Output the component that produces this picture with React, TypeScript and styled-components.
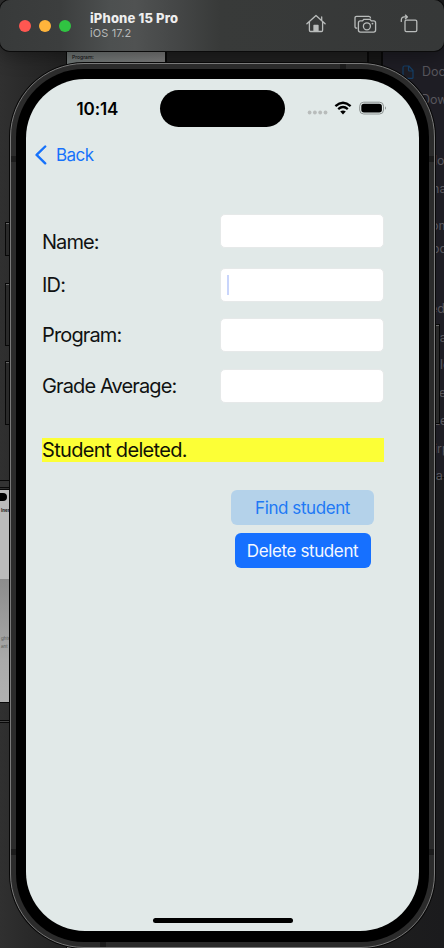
import React from "react";
import styled, { createGlobalStyle } from "styled-components";

const Global = createGlobalStyle`
  *, *::before, *::after { box-sizing: border-box; }
  html, body { margin: 0; background: #202020; overflow: hidden; }
  body { font-family: Inter, "Liberation Sans", sans-serif; }
`;

const Desktop = styled.main`
  position: relative;
  width: 444px;
  height: 948px;
  overflow: hidden;
  background: linear-gradient(90deg, #303030 0, #292929 30px, #1b1b1b 110px, #1e1e1e 370px, #1b1b1d 100%);
`;

/* Windows lying behind the simulator */
const BackWindow = styled.div<{ $x: number; $y: number; $w: number; $h: number; $bg: string }>`
  position: absolute;
  left: ${(p) => p.$x}px;
  top: ${(p) => p.$y}px;
  display: flex;
  flex-direction: column;
  width: ${(p) => p.$w}px;
  height: ${(p) => p.$h}px;
  background: ${(p) => p.$bg};
  border: 1px solid #090909;
`;

const PreviewCaption = styled.span`
  padding: 8px 0 0 5px;
  font-size: 5px;
  line-height: 6px;
  font-weight: 500;
  color: #151515;
`;

const MiniIsland = styled.i`
  width: 7px;
  height: 8px;
  margin-top: 3px;
  border-radius: 0 4px 4px 0;
  background: #000;
`;

const MiniText = styled.span<{ $height: number; $strong?: boolean }>`
  height: ${(p) => p.$height}px;
  padding-left: 1px;
  font-size: 4.5px;
  line-height: 6px;
  font-weight: ${(p) => (p.$strong ? 700 : 400)};
  white-space: nowrap;
  color: ${(p) => (p.$strong ? "#222" : "#555")};
`;

const MiniContent = styled.div`
  display: flex;
  flex-direction: column;
  height: 68px;
  margin-top: 7px;
`;

const Sidebar = styled.nav`
  display: flex;
  flex-direction: column;
  padding: 19px 0 0 19px;
`;

const SidebarItem = styled.div<{ $height: number; $indent: number }>`
  display: flex;
  align-items: flex-start;
  gap: 8px;
  height: ${(p) => p.$height}px;
  padding-left: ${(p) => p.$indent}px;
  font-size: 12.5px;
  line-height: 13px;
  white-space: nowrap;
  color: #57565c;
`;

const TitleBar = styled.header`
  position: relative;
  display: flex;
  align-items: center;
  height: 51px;
  padding: 0 26px 0 19px;
  border-radius: 10px;
  background: linear-gradient(90deg, #383a3a 0, #3c3e3e 60px, #4d5050 110px, #505252 135px, #454747 175px, #383a39 220px, #363838 100%);
  box-shadow: 0 0 0 1px #0b0b0b, 0 4px 20px rgba(0, 0, 0, 0.4);
`;

const Lights = styled.div`
  display: flex;
  gap: 8px;
`;

const Light = styled.i<{ $color: string }>`
  width: 12px;
  height: 12px;
  border-radius: 50%;
  background: ${(p) => p.$color};
`;

const Device = styled.div`
  flex: 1;
  margin-left: 19px;
  white-space: nowrap;
`;

const DeviceName = styled.div`
  font-size: 13px;
  font-weight: 800;
  line-height: 15px;
  letter-spacing: 0.16px;
  color: #eeeeee;
`;

const DeviceSystem = styled.div`
  font-size: 11px;
  line-height: 14px;
  letter-spacing: 0.12px;
  color: #b8baba;
`;

const Tools = styled.div`
  display: flex;
  align-items: center;
  gap: 28px;
  padding-bottom: 4px;
  > :last-child { margin-left: -4.5px; }
`;

const Phone = styled.section`
  position: relative;
  width: 425px;
  height: 885px;
  margin: 12px 0 0 10px;
  padding: 5px;
  border: 1px solid #7a7a7a;
  border-radius: 74px;
  background: #2b2b2b;
  box-shadow: 0 0 0 1px #080808;
`;

const Bezel = styled.div`
  width: 413px;
  height: 873px;
  padding: 10px;
  border-radius: 68px;
  background: #000;
`;

const Screen = styled.div`
  display: flex;
  flex-direction: column;
  width: 393px;
  height: 852px;
  border-radius: 59px;
  overflow: hidden;
  background: #e1e9e8;
`;

const Antenna = styled.i<{ $x: number; $y: number; $flat?: boolean }>`
  position: absolute;
  left: ${(p) => p.$x}px;
  top: ${(p) => p.$y}px;
  width: ${(p) => (p.$flat ? 6 : 5)}px;
  height: ${(p) => (p.$flat ? 5 : 6)}px;
  background: #1b1b1b;
`;

const SideButton = styled.i<{ $x: number; $y: number; $h: number }>`
  position: absolute;
  left: ${(p) => p.$x}px;
  top: ${(p) => p.$y}px;
  width: 5px;
  height: ${(p) => p.$h}px;
  background: #2a2a2a;
  border: 1px solid #080808;
  box-shadow: inset 0 1px #686868;
`;

const StatusBar = styled.div`
  display: flex;
  align-items: flex-start;
  height: 59px;
  padding-top: 11px;
`;

const Time = styled.time`
  width: 134px;
  padding: 8px 0 0 50.5px;
  font-size: 17px;
  font-weight: 600;
  line-height: 22px;
  letter-spacing: -0.1px;
  white-space: nowrap;
  color: #000;
`;

const Island = styled.div`
  width: 125px;
  height: 37px;
  border-radius: 19px;
  background: #000;
`;

const StatusIcons = styled.svg`
  margin: 8px 0 0 21px;
`;

const BackButton = styled.button`
  display: flex;
  align-items: center;
  gap: 9px;
  height: 34px;
  margin: 0;
  padding: 0 0 0 9px;
  border: 0;
  background: none;
  font: 400 17px/22px Inter, sans-serif;
  letter-spacing: -0.55px;
  color: #1672fb;
`;

const Form = styled.form`
  display: flex;
  flex-direction: column;
  padding: 42px 35px 0 16px;
`;

const Row = styled.label<{ $gap: number; $labelTop: number }>`
  display: grid;
  grid-template-columns: 178px 164px;
  height: 34px;
  margin-bottom: ${(p) => p.$gap}px;
  > span { padding-top: ${(p) => p.$labelTop}px; }
`;

const LabelText = styled.span<{ $spacing: number }>`
  font-size: 20px;
  line-height: 24px;
  letter-spacing: ${(p) => p.$spacing}px;
  white-space: nowrap;
  color: #101212;
`;

const Field = styled.div`
  display: flex;
  align-items: center;
  height: 34px;
  padding-left: 6px;
  border: 1px solid #e6e9e9;
  border-radius: 5px;
  background: #fff;
`;

const Caret = styled.i`
  width: 2px;
  height: 20px;
  background: #c9d5fb;
`;

const Notice = styled.output`
  display: block;
  height: 24px;
  margin-top: 1px;
  font-size: 20px;
  line-height: 25px;
  letter-spacing: -0.66px;
  background: #fcff36;
  color: #101205;
`;

const Actions = styled.div`
  display: flex;
  flex-direction: column;
  align-items: center;
  gap: 8px;
  width: 164px;
  margin: 28px 0 0 178.5px;
`;

const Action = styled.button<{ $filled?: boolean }>`
  width: ${(p) => (p.$filled ? 136 : 143)}px;
  height: 35px;
  padding: 0;
  border: 0;
  border-radius: 6px;
  background: ${(p) => (p.$filled ? "#1670ff" : "#b4d2ea")};
  color: ${(p) => (p.$filled ? "#f4f8ff" : "#2079f5")};
  font: 400 17px/22px Inter, sans-serif;
  letter-spacing: ${(p) => (p.$filled ? -0.38 : -0.42)}px;
  white-space: nowrap;
`;

const HomeIndicator = styled.div`
  width: 140px;
  height: 5px;
  margin: auto auto 8px;
  border-radius: 3px;
  background: #000;
`;

const sidebarItems = [
  { text: "Dow", height: 61, indent: 19 },
  { text: "lo", height: 28, indent: 32 },
  { text: "na", height: 37, indent: 30 },
  { text: "om", height: 23, indent: 29 },
  { text: "oc", height: 60, indent: 30 },
  { text: "ed", height: 29, indent: 28 },
  { text: "ra", height: 27, indent: 33 },
  { text: "ld", height: 28, indent: 38 },
  { text: "te", height: 28, indent: 33 },
  { text: "Le", height: 28, indent: 31 },
  { text: "irp", height: 27, indent: 32 },
  { text: "ra", height: 13, indent: 29 },
];

const fields = [
  { label: "Name:", gap: 20, top: 16, spacing: -0.95 },
  { label: "ID:", gap: 16, top: 5, spacing: -0.8 },
  { label: "Program:", gap: 17, top: 5, spacing: -0.86 },
  { label: "Grade Average:", gap: 34, top: 5, spacing: -0.87 },
];

export default function App() {
  return (
    <Desktop>
      <Global />
      <BackWindow $x={66} $y={45} $w={100} $h={24} $bg="linear-gradient(90deg,#707776,#7b7b7b)">
        <PreviewCaption>Program:</PreviewCaption>
      </BackWindow>
      <BackWindow $x={166} $y={40} $w={202} $h={30} $bg="#202020" />
      <BackWindow $x={368} $y={40} $w={14} $h={30} $bg="#171717" />
      <BackWindow $x={382} $y={45} $w={70} $h={433} $bg="#1e1d24">
        <Sidebar>
          <SidebarItem $height={28} $indent={0}>
            <svg width="12" height="15" viewBox="0 0 12 15" fill="none" stroke="#153e65" strokeWidth="1.2">
              <path d="M1 2.5v9.9q0 1 1 1h8q1 0 1-1V5.5L7 1H2.5Q1 1 1 2.5M6.5 1v4q0 1 1 1H11" />
            </svg>
            Doc
          </SidebarItem>
          {sidebarItems.map((item, i) => (
            <SidebarItem key={i} $height={item.height} $indent={item.indent}>{item.text}</SidebarItem>
          ))}
        </Sidebar>
      </BackWindow>
      <BackWindow $x={-1} $y={489} $w={11} $h={214} $bg="linear-gradient(180deg,#bbb 0 89px,#8c8c8c 89px,#aaa 170px,#b0b0b0)">
        <MiniIsland />
        <MiniContent>
          <MiniText $height={67} $strong>Iner</MiniText>
        </MiniContent>
        <MiniText $height={60} />
        <MiniText $height={8}>ghts</MiniText>
        <MiniText $height={8}>ant</MiniText>
      </BackWindow>
      <BackWindow $x={-2} $y={480} $w={12} $h={8} $bg="#333" />
      <BackWindow $x={-2} $y={720} $w={12} $h={3} $bg="#444" />
      <BackWindow $x={66} $y={945} $w={100} $h={8} $bg="#777" />

      <TitleBar>
        <Lights>
          <Light $color="#ff5751" />
          <Light $color="#ffb43b" />
          <Light $color="#30c442" />
        </Lights>
        <Device>
          <DeviceName>iPhone 15 Pro</DeviceName>
          <DeviceSystem>iOS 17.2</DeviceSystem>
        </Device>
        <Tools>
          <svg width="20" height="20" viewBox="0 0 20 20" fill="none" stroke="#b9bcbb" strokeWidth="1.3" strokeLinecap="round" strokeLinejoin="round">
            <path d="M.9 9.7 10 1.4l9.1 8.3M15.7 6.2V3M3.4 8v8.3q0 1.2 1.2 1.2h10.8q1.2 0 1.2-1.2V8" />
            <path d="M8 17v-5.5h4V17z" fill="#b9bcbb" />
          </svg>
          <svg width="23" height="20" viewBox="0 0 23 20" fill="none" stroke="#b9bcbb" strokeWidth="1.3" strokeLinejoin="round">
            <path d="M3.3 14.2H2.7Q1 14.2 1 12.5V4Q1 2.4 2.6 2.4h12.2q1.7 0 1.8 2" />
            <path d="M6.4 6.9h2.1l1.4-1.6h6l1.4 1.6h2.3q2 0 2 2v7.2q0 2-2 2H6.4q-2 0-2-2V8.9q0-2 2-2Z" />
            <circle cx="12.9" cy="12.3" r="3.5" />
            <circle cx="18.5" cy="9.6" r=".9" fill="#b9bcbb" stroke="none" />
          </svg>
          <svg width="18" height="20" viewBox="0 0 18 20" fill="none" stroke="#b9bcbb" strokeWidth="1.3" strokeLinejoin="round">
            <rect x="5" y="6.2" width="11.8" height="11.5" rx="1.4" />
            <path d="M1.3 7.4V6Q1.3 2.9 4.4 2.9H7.2M5.4 1.1 7.4 2.9 5.4 4.7" strokeLinecap="round" />
          </svg>
        </Tools>
      </TitleBar>

      <Phone>
        <SideButton $x={-6} $y={158} $h={34} />
        <SideButton $x={-6} $y={219} $h={63} />
        <SideButton $x={-6} $y={297} $h={64} />
        <SideButton $x={424} $y={260} $h={100} />
        <Antenna $x={329} $y={0} $flat />
        <Antenna $x={0} $y={92} />
        <Antenna $x={418} $y={92} />
        <Antenna $x={0} $y={785} />
        <Antenna $x={418} $y={785} />
        <Antenna $x={89} $y={878} $flat />
        <Bezel>
          <Screen>
            <StatusBar>
              <Time>10:14</Time>
              <Island />
              <StatusIcons width="82" height="20" viewBox="0 0 82 20">
                <g fill="#b8bcbb">
                  <circle cx="3.6" cy="14.5" r="1.9" />
                  <circle cx="8.9" cy="14.5" r="1.9" />
                  <circle cx="14.2" cy="14.5" r="1.9" />
                  <circle cx="19.5" cy="14.5" r="1.9" />
                </g>
                <g fill="none" stroke="#000" strokeWidth="2.4">
                  <path d="M29.4 8.1q7.6-6.6 15.2 0M32.2 11.1q4.8-4 9.6 0" />
                </g>
                <path d="m37 16.4-2.8-2.8q2.8-2.4 5.6 0z" />
                <rect x="53.7" y="4.2" width="23.8" height="11.8" rx="4" fill="none" stroke="#8c9291" />
                <rect x="55.3" y="5.8" width="20.6" height="8.6" rx="2.6" />
                <path d="M79 8.2q2 1.8 0 3.6z" fill="#8c9291" />
              </StatusIcons>
            </StatusBar>
            <BackButton>
              <svg width="12" height="20" viewBox="0 0 12 20" fill="none" stroke="#1672fb" strokeWidth="2.4" strokeLinecap="round" strokeLinejoin="round">
                <path d="m10.2 1.5-8.6 8.4 8.6 8.4" />
              </svg>
              Back
            </BackButton>
            <Form>
              {fields.map((f) => (
                <Row key={f.label} $gap={f.gap} $labelTop={f.top}>
                  <LabelText $spacing={f.spacing}>{f.label}</LabelText>
                  <Field>{f.label === "ID:" && <Caret />}</Field>
                </Row>
              ))}
              <Notice>Student deleted.</Notice>
              <Actions>
                <Action type="button">Find student</Action>
                <Action type="button" $filled>Delete student</Action>
              </Actions>
            </Form>
            <HomeIndicator />
          </Screen>
        </Bezel>
      </Phone>
    </Desktop>
  );
}
